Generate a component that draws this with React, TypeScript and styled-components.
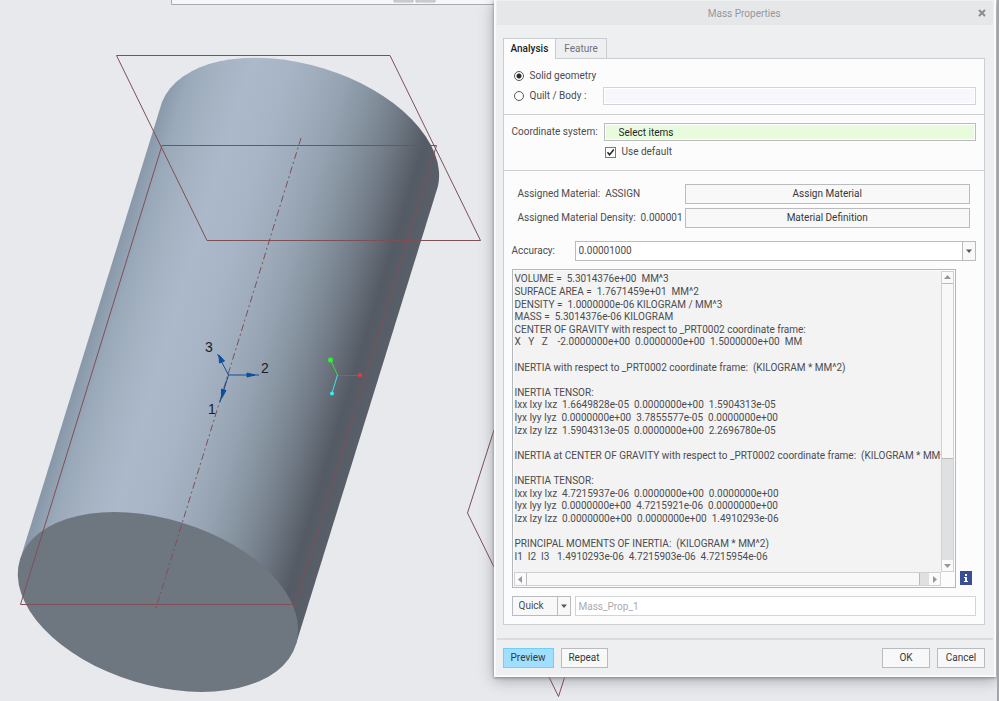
import React from 'react';
import styled, { createGlobalStyle, css } from 'styled-components';

const GlobalStyle = createGlobalStyle`
  * { box-sizing: border-box; }
  html, body, #root { margin: 0; min-height: 100%; }
  body {
    background: #e8e9ed;
    color: #4a4c50;
    font: 10px/14px Roboto, "Open Sans", sans-serif;
    overflow: hidden;
  }
  button, input, select { font: inherit; color: inherit; margin: 0; border-radius: 0; }
`;

const Desktop = styled.main`
  position: relative;
  min-height: 100vh;
  border-right: 2px solid #a3a4a9;
  overflow: hidden;
`;

const Scene = styled.svg`
  position: absolute;
  inset: 0;
  width: 100%;
  height: 100%;
`;

const Dialog = styled.section`
  position: relative;
  display: flex;
  flex-direction: column;
  width: calc(50% + 4px);
  margin-left: auto;
  margin-right: 1px;
  background: #eeeff1;
  border: 1px solid #fafafb;
  border-width: 0 2px 2px;
  box-shadow: 0 1px 3px #85868a, 0 3px 14px rgba(60, 62, 68, 0.4);
`;

const TitleBar = styled.header`
  display: flex;
  align-items: center;
  height: 24px;
  margin: 1px 1px 0;
  padding-right: 7px;
  background: #e6e7e9;
  color: #96989c;
`;

const Title = styled.h1`
  flex: 1;
  margin: 0;
  padding: 1px 0 0 14px;
  font-size: 10px;
  font-weight: 400;
  text-align: center;
`;

const CloseButton = styled.button`
  display: flex;
  padding: 0;
  border: 0;
  background: none;
`;

const Content = styled.div`
  padding: 13px 9px 13px 7px;
`;

const Tabs = styled.div`
  display: flex;
`;

const Tab = styled.button<{ $active?: boolean }>`
  height: 20px;
  padding: 0 8px;
  border: 1px solid #c9cbcf;
  border-bottom: 0;
  background: #eeeff1;
  color: #6f7277;
  & + & { border-left: 0; }
  ${({ $active }) => $active && css`
    position: relative;
    height: 21px;
    margin-bottom: -1px;
    padding: 0 7px;
    background: #fcfcfc;
    color: #1d1e20;
    font-weight: 500;
  `}
`;

const Panel = styled.div`
  border: 1px solid #ccced1;
  background: #fcfcfc;
`;

const Section = styled.div`
  display: flex;
  flex-direction: column;
  padding: 7px 8px 8px;
  border-bottom: 1px solid #cdcfd2;
`;

const Row = styled.div<{ $indent?: number; $gap?: number }>`
  display: flex;
  align-items: center;
  min-height: 20px;
  padding-left: ${({ $indent = 0 }) => $indent}px;
  gap: ${({ $gap = 0 }) => $gap}px;
`;

const Choice = styled.label<{ $width?: number }>`
  display: flex;
  align-items: center;
  gap: 6px;
  width: ${({ $width }) => ($width ? `${$width}px` : 'auto')};
`;

const Radio = styled.input.attrs({ type: 'radio' })`
  appearance: none;
  width: 10px;
  height: 10px;
  border: 1px solid #55575b;
  border-radius: 50%;
  background: #fff;
  &:checked { background: radial-gradient(circle, #2a2b2e 0 2px, #fff 3px); }
`;

const CheckBox = styled.input.attrs({ type: 'checkbox' })`
  appearance: none;
  width: 11px;
  height: 11px;
  border: 1px solid #77797d;
  background: #fff;
  &:checked {
    background: #fff url("data:image/svg+xml,%3Csvg xmlns='http://www.w3.org/2000/svg' viewBox='0 0 9 9'%3E%3Cpath d='M1.5 4.3 3.6 6.8 7.8 1.5' fill='none' stroke='%23222' stroke-width='1.5'/%3E%3C/svg%3E");
  }
`;

const Label = styled.label<{ $width: number }>`
  flex: none;
  width: ${({ $width }) => $width}px;
  white-space: pre;
`;

type Tone = 'collector' | 'active' | 'plain';
const tones = {
  collector: css`background: #f9f7fe; border-color: #d3d5d8;`,
  active: css`background: #e8fbdc; border-color: #b9bbbf; color: #232427; padding-left: 14px;`,
  plain: css`background: #fff; border-color: #d2d4d7; height: 20px;`,
};

const TextBox = styled.input<{ $tone: Tone }>`
  flex: 1;
  min-width: 0;
  height: 18px;
  padding: 0 3px;
  border: 1px solid;
  outline: 0;
  box-shadow: inset 0 0 0 1px #fff;
  ${({ $tone }) => tones[$tone]}
  &::placeholder { color: #a9abae; opacity: 1; }
`;

const Material = styled.div`
  display: grid;
  grid-template-columns: 167px 1fr;
  grid-auto-rows: 20px;
  row-gap: 4px;
  align-items: center;
  padding: 13px 14px 13px;
  white-space: pre;
`;

const Button = styled.button<{ $primary?: boolean; $width?: number }>`
  height: 20px;
  width: ${({ $width }) => ($width ? `${$width}px` : '100%')};
  padding: 0;
  border: 1px solid ${({ $primary }) => ($primary ? '#71cdfb' : '#b9bbbe')};
  background: ${({ $primary }) => ($primary ? '#a0dfff' : '#f8f8f8')};
  color: #36383b;
`;

const Fields = styled.div`
  padding: 0 8px 8px;
`;

const Combo = styled.div<{ $width?: number; $filled?: boolean }>`
  position: relative;
  display: flex;
  flex: ${({ $width }) => ($width ? `0 0 ${$width}px` : '1')};
  height: 20px;
  border: 1px solid #b9bbbe;
  background: ${({ $filled }) => ($filled ? '#f8f8f8' : '#fff')};
  svg {
    position: absolute;
    top: 0;
    right: 0;
    width: 13px;
    height: 18px;
    border-left: 1px solid #b9bbbe;
    background: #f8f8f8;
    pointer-events: none;
  }
`;

const Select = styled.select<{ $pad: number }>`
  flex: 1;
  appearance: none;
  padding: 0 14px 0 ${({ $pad }) => $pad}px;
  border: 0;
  outline: 0;
  background: none;
`;

const ResultRow = styled.div`
  display: flex;
  align-items: flex-end;
  gap: 4px;
  margin: 8px 0;
`;

const ResultBox = styled.div`
  display: grid;
  flex: 1;
  min-width: 0;
  height: 319px;
  grid-template: minmax(0, 1fr) 14px / minmax(0, 1fr) 13px;
  padding: 1px;
  border: 1px solid #b4b6b9;
  background: #fcfcfc;
`;

const Output = styled.output`
  display: grid;
  grid-auto-rows: 1fr;
  align-items: center;
  padding: 2px 0 9px 1px;
  overflow: hidden;
  background: #f3f3f3;
  line-height: 12px;
  white-space: pre;
`;

const ScrollBar = styled.div<{ $vertical?: boolean }>`
  display: flex;
  flex-direction: ${({ $vertical }) => ($vertical ? 'column' : 'row')};
  border: 1px solid #cfd1d4;
  background: #dfe0e2;
`;

const Arrow = styled.button`
  display: flex;
  flex: 0 0 11px;
  align-items: center;
  justify-content: center;
  min-height: 11px;
  padding: 0;
  border: 0;
  background: #fafafa;
`;

const Thumb = styled.div<{ $vertical?: boolean; $grow: number }>`
  flex: ${({ $grow }) => $grow} 1 0;
  border: 0 solid #b9bbbe;
  border-width: ${({ $vertical }) => ($vertical ? '1px 0' : '0 1px')};
  background: #f8f8f8;
`;

const Track = styled.div<{ $grow: number }>`
  flex: ${({ $grow }) => $grow} 1 0;
`;

const InfoButton = styled.button`
  display: flex;
  flex: none;
  width: 12px;
  height: 14px;
  margin: 0 4px 3px 0;
  padding: 0;
  border: 0;
`;

const Footer = styled.footer`
  display: flex;
  gap: 7px;
  margin: 0 1px;
  padding: 8px 8px 7px 6px;
  border-top: 2px solid #d9dbdd;
`;

const Spacer = styled.div`
  flex: 1;
`;

const results = `VOLUME =  5.3014376e+00  MM^3
SURFACE AREA =  1.7671459e+01  MM^2
DENSITY =  1.0000000e-06 KILOGRAM / MM^3
MASS =  5.3014376e-06 KILOGRAM
CENTER OF GRAVITY with respect to _PRT0002 coordinate frame:
X   Y   Z    -2.0000000e+00  0.0000000e+00  1.5000000e+00  MM

INERTIA with respect to _PRT0002 coordinate frame:  (KILOGRAM * MM^2)

INERTIA TENSOR:
Ixx Ixy Ixz  1.6649828e-05  0.0000000e+00  1.5904313e-05
Iyx Iyy Iyz  0.0000000e+00  3.7855577e-05  0.0000000e+00
Izx Izy Izz  1.5904313e-05  0.0000000e+00  2.2696780e-05

INERTIA at CENTER OF GRAVITY with respect to _PRT0002 coordinate frame:  (KILOGRAM * MM^2)

INERTIA TENSOR:
Ixx Ixy Ixz  4.7215937e-06  0.0000000e+00  0.0000000e+00
Iyx Iyy Iyz  0.0000000e+00  4.7215921e-06  0.0000000e+00
Izx Izy Izz  0.0000000e+00  0.0000000e+00  1.4910293e-06

PRINCIPAL MOMENTS OF INERTIA:  (KILOGRAM * MM^2)
I1  I2  I3   1.4910293e-06  4.7215903e-06  4.7215954e-06`.split('\n');

const arrowPaths = {
  up: 'M0 5 3.5 1 7 5Z',
  down: 'M0 2 3.5 6 7 2Z',
  left: 'M5 0 1 3.5 5 7Z',
  right: 'M2 0 6 3.5 2 7Z',
};

function ScrollArrow({ dir }: { dir: keyof typeof arrowPaths }) {
  return (
    <Arrow aria-label={`Scroll ${dir}`}>
      <svg width="7" height="7"><path d={arrowPaths[dir]} fill="#96989b" /></svg>
    </Arrow>
  );
}

function DropArrow() {
  return <svg viewBox="0 0 12 18" aria-hidden="true"><path d="M3 7.5h6L6 11Z" fill="#55575a" /></svg>;
}

function ModelView() {
  return (
    <Scene aria-label="Cylinder model">
      <defs>
        <linearGradient id="shade" gradientUnits="userSpaceOnUse" x1="20" y1="560" x2="296" y2="644">
          <stop offset="0" stopColor="#8797a8" />
          <stop offset="0.07" stopColor="#9aa9b9" />
          <stop offset="0.16" stopColor="#a4b2c2" />
          <stop offset="0.27" stopColor="#abb9cb" />
          <stop offset="0.4" stopColor="#a6b4c5" />
          <stop offset="0.5" stopColor="#9eacbc" />
          <stop offset="0.6" stopColor="#93a1b0" />
          <stop offset="0.7" stopColor="#84919d" />
          <stop offset="0.8" stopColor="#717b87" />
          <stop offset="0.87" stopColor="#616872" />
          <stop offset="0.92" stopColor="#555b65" />
          <stop offset="1" stopColor="#585f69" />
        </linearGradient>
      </defs>
      <path d="M171.5 -2V4.5H500V-2" fill="#f6f7f8" stroke="#a9abae" />
      <path d="M394 0h19v2h-19zM416 0h19v2h-19z" fill="#d9dadc" stroke="#b9bbbe" />
      <path d="M20 560 162 102A144.4 83 17 0 1 438 186L296 644Z" fill="url(#shade)" />
      <ellipse cx="158" cy="602" rx="144.4" ry="83" transform="rotate(17 158 602)" fill="#6e7680" />
      <g fill="none" stroke="#7f4f58">
        <path d="M116.5 55.5H390L480.5 240.5H207Z" />
        <path d="M162 145.5H436.5L295 604.5H20.5Z" />
        <path d="M301 138 156 608" strokeDasharray="7 3 2 3" />
        <path d="M494 430 467.5 513 494 567M548.5 676 558.5 696.5 565 676" />
      </g>
      <g stroke="#0d4f9e" fill="#0d4f9e">
        <path d="M228.5 375 217.5 354M228.5 375H259M228.5 375 220 402" fill="none" />
        <path d="M219 355 219.5 363 224.500 361ZM247 373v4l8-2ZM221.5 389l4.5 1.5-4.5 8Z" />
      </g>
      <g fill="#1c2026" fontFamily="Liberation Sans, sans-serif" fontSize="14">
        <text x="205" y="352">3</text>
        <text x="261" y="373">2</text>
        <text x="208" y="414">1</text>
      </g>
      <g fill="none">
        <path d="M337.5 375 330.5 360" stroke="#3fdc3f" />
        <path d="M337.5 375.5H360" stroke="#f03434" />
        <path d="M337.5 375 332 393" stroke="#3fe4e8" />
      </g>
      <circle cx="330.5" cy="360" r="2.5" fill="#2df52d" />
      <circle cx="360" cy="375" r="2" fill="#f33" />
      <circle cx="332" cy="393.5" r="2" fill="#2ef2f5" />
    </Scene>
  );
}

export default function App() {
  return (
    <Desktop>
      <GlobalStyle />
      <ModelView />
      <Dialog role="dialog" aria-labelledby="title">
        <TitleBar>
          <Title id="title">Mass Properties</Title>
          <CloseButton aria-label="Close">
            <svg width="8" height="8" viewBox="0 0 8 8"><path d="M1 1 7 7M7 1 1 7" stroke="#8b8d90" strokeWidth="2" /></svg>
          </CloseButton>
        </TitleBar>
        <Content>
          <Tabs role="tablist">
            <Tab role="tab" aria-selected="true" $active>Analysis</Tab>
            <Tab role="tab" aria-selected="false">Feature</Tab>
          </Tabs>
          <Panel>
            <Section>
              <Row $indent={2}>
                <Choice><Radio name="geometry" defaultChecked />Solid geometry</Choice>
              </Row>
              <Row $indent={2}>
                <Choice $width={89}><Radio name="geometry" />Quilt / Body :</Choice>
                <TextBox $tone="collector" aria-label="Quilt or body" />
              </Row>
            </Section>
            <Section>
              <Row>
                <Label $width={92} htmlFor="csys">Coordinate system:</Label>
                <TextBox $tone="active" id="csys" defaultValue="Select items" />
              </Row>
              <Row $indent={93}>
                <Choice><CheckBox defaultChecked />Use default</Choice>
              </Row>
            </Section>
            <Material>
              <span>Assigned Material:  ASSIGN</span>
              <Button>Assign Material</Button>
              <span>Assigned Material Density:  0.000001</span>
              <Button>Material Definition</Button>
            </Material>
            <Fields>
              <Row>
                <Label $width={63} htmlFor="accuracy">Accuracy:</Label>
                <Combo>
                  <Select id="accuracy" $pad={3}><option>0.00001000</option></Select>
                  <DropArrow />
                </Combo>
              </Row>
              <ResultRow>
                <ResultBox>
                  <Output>{results.map((line, i) => <span key={i}>{line}</span>)}</Output>
                  <ScrollBar $vertical>
                    <ScrollArrow dir="up" />
                    <Thumb $vertical $grow={177} />
                    <Track $grow={102} />
                    <ScrollArrow dir="down" />
                  </ScrollBar>
                  <ScrollBar>
                    <ScrollArrow dir="left" />
                    <Thumb $grow={394} />
                    <Track $grow={9} />
                    <ScrollArrow dir="right" />
                  </ScrollBar>
                </ResultBox>
                <InfoButton aria-label="Information">
                  <svg width="12" height="14" viewBox="0 0 12 14">
                    <path d="M0 0h12v14H0Z" fill="#3a4f93" />
                    <path d="M5 3h2v2H5ZM4 6h3v4h1v1H4v-1h1V7H4Z" fill="#fff" />
                  </svg>
                </InfoButton>
              </ResultRow>
              <Row $gap={4}>
                <Combo $width={59} $filled>
                  <Select aria-label="Analysis type" $pad={6}><option>Quick</option></Select>
                  <DropArrow />
                </Combo>
                <TextBox $tone="plain" placeholder="Mass_Prop_1" aria-label="Analysis name" />
              </Row>
            </Fields>
          </Panel>
        </Content>
        <Footer>
          <Button $primary $width={51}>Preview</Button>
          <Button $width={47}>Repeat</Button>
          <Spacer />
          <Button $width={48}>OK</Button>
          <Button $width={48}>Cancel</Button>
        </Footer>
      </Dialog>
    </Desktop>
  );
}
